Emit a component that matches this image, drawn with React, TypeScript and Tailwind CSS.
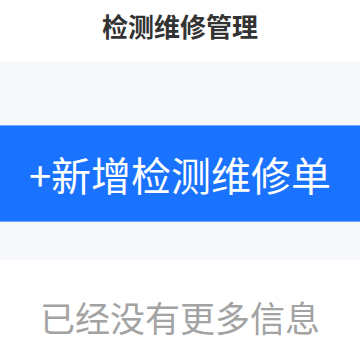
export default function App() {
  const cjk = { fontFamily: '"Noto Sans CJK SC", "Noto Sans", sans-serif' };
  return (
    <div className="w-[360px] h-[360px] bg-white flex flex-col overflow-hidden" style={cjk}>
      <div className="h-[62px] flex items-start justify-center pt-[7px]">
        <span className="text-[26px] leading-[38px] font-bold text-[#333333]">检测维修管理</span>
      </div>
      <div className="h-[198px] bg-[#f7f8fc] flex flex-col pt-[63px]">
        <div className="h-[97px] bg-[#1a73ff] border-y border-[#6fa6ff] flex items-center justify-center">
          <span className="text-[40px] leading-[50px] text-white">+新增检测维修单</span>
        </div>
      </div>
      <div className="flex-1 flex items-start justify-center pt-[35px]">
        <span className="text-[35px] leading-[44px] text-[#a3a3a3]">已经没有更多信息</span>
      </div>
    </div>
  );
}
